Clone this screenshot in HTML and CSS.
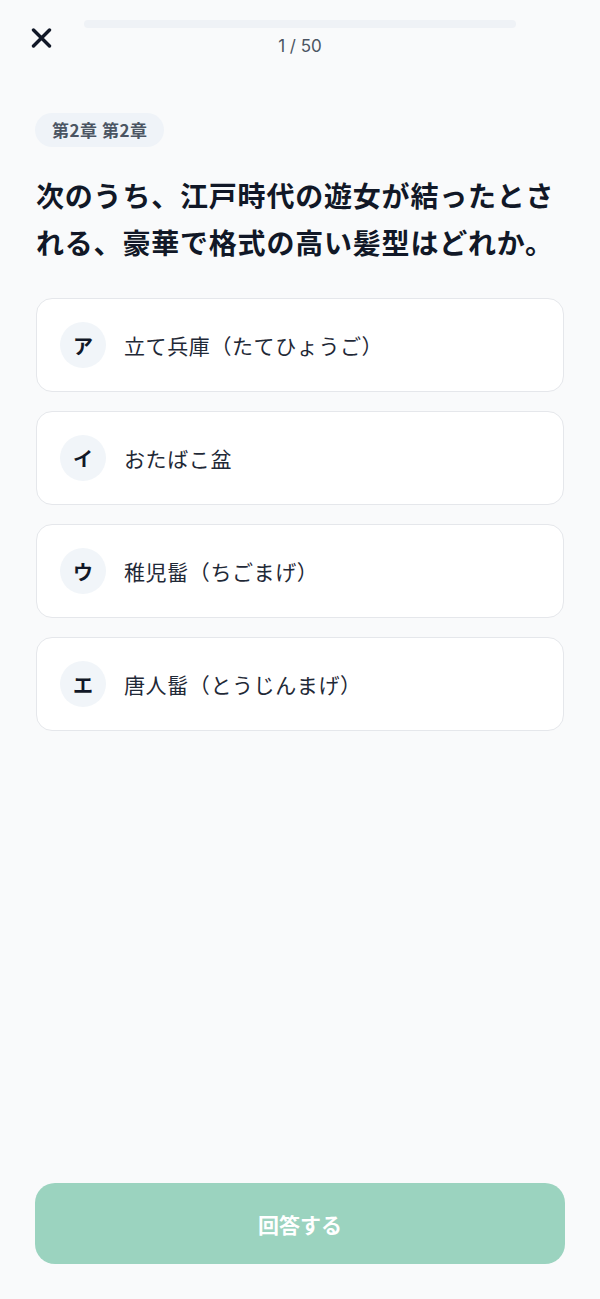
FILE: index.html
```html
<!DOCTYPE html>
<html lang="ja">
<head>
<meta charset="utf-8">
<meta name="viewport" content="width=device-width, initial-scale=1">
<title>クイズ</title>
<link rel="stylesheet" href="styles.css">
</head>
<body>
<div class="page">
  <header class="header">
    <div class="close-cell">
      <button class="close" aria-label="閉じる">
        <svg width="21" height="20" viewBox="0 0 21 20" aria-hidden="true">
          <path d="M2.5 2 L18.5 18 M18.5 2 L2.5 18" stroke="#111827" stroke-width="3.4" stroke-linecap="round" fill="none"/>
        </svg>
      </button>
    </div>
    <div class="progress-cell">
      <div class="progress"><div class="progress-fill" style="width:0%"></div></div>
      <div class="counter">1 / 50</div>
    </div>
    <div></div>
  </header>

  <main class="content">
    <span class="chip">第2章 第2章</span>
    <h1 class="question">次のうち、江戸時代の遊女が結ったとされる、豪華で格式の高い髪型はどれか。</h1>

    <ul class="options">
      <li class="option"><span class="badge">ア</span><span class="label">立て兵庫（たてひょうご）</span></li>
      <li class="option"><span class="badge">イ</span><span class="label">おたばこ盆</span></li>
      <li class="option"><span class="badge">ウ</span><span class="label">稚児髷（ちごまげ）</span></li>
      <li class="option"><span class="badge">エ</span><span class="label">唐人髷（とうじんまげ）</span></li>
    </ul>
  </main>

  <footer class="footer">
    <button class="submit" disabled>回答する</button>
  </footer>
</div>
</body>
</html>
```

FILE: styles.css
```css
html, body {
  margin: 0;
  padding: 0;
}

body {
  background: #f9fafb;
  font-family: "Inter", "Noto Sans CJK JP", sans-serif;
  color: #111827;
}

.page {
  min-height: 100vh;
  box-sizing: border-box;
  display: flex;
  flex-direction: column;
  padding-bottom: 35px;
}

.header {
  display: grid;
  grid-template-columns: 1fr 432px 1fr;
  padding-top: 20px;
}

.close-cell {
  padding-left: 31px;
  padding-top: 8px;
}

.close {
  display: block;
  width: 21px;
  height: 20px;
  padding: 0;
  margin: 0;
  border: 0;
  background: none;
}

.close svg {
  display: block;
}

.progress {
  height: 8px;
  border-radius: 4px;
  background: #eff2f6;
  overflow: hidden;
}

.progress-fill {
  height: 100%;
  background: #34a57f;
}

.counter {
  margin-top: 8px;
  text-align: center;
  font-family: "Inter", "Noto Sans CJK JP", sans-serif;
  font-size: 17px;
  line-height: 20px;
  color: #4b5563;
}

.content {
  padding: 0 36px;
  display: flex;
  flex-direction: column;
  align-items: flex-start;
}

.chip {
  margin-top: 57px;
  margin-left: -1px;
  height: 34px;
  line-height: 34px;
  padding: 0 17px;
  border-radius: 17px;
  background: #eff3f8;
  font-family: "Noto Sans CJK JP", sans-serif;
  font-size: 17px;
  font-weight: 700;
  letter-spacing: 0.5px;
  color: #4b5563;
}

.question {
  margin: 25px 0 0;
  font-family: "Noto Sans CJK JP", sans-serif;
  font-size: 28px;
  line-height: 47px;
  font-weight: 700;
  letter-spacing: 0.8px;
  color: #111827;
}

.options {
  list-style: none;
  margin: 32px 0 0;
  padding: 0;
  width: 100%;
  display: flex;
  flex-direction: column;
  gap: 19px;
}

.option {
  display: flex;
  align-items: center;
  gap: 18px;
  box-sizing: border-box;
  height: 94px;
  padding: 0 23px;
  background: #ffffff;
  border: 1px solid #e5e7eb;
  border-radius: 16px;
}

.badge {
  flex: none;
  width: 46px;
  height: 46px;
  border-radius: 50%;
  background: #f1f5f9;
  display: flex;
  align-items: center;
  justify-content: center;
  font-family: "Noto Sans CJK JP", sans-serif;
  font-size: 20px;
  font-weight: 700;
  color: #111827;
}

.label {
  font-family: "Noto Sans CJK JP", sans-serif;
  font-size: 21px;
  letter-spacing: 0.6px;
  color: #1f2937;
}

.footer {
  margin-top: auto;
  padding: 0 35px;
}

.submit {
  display: block;
  width: 100%;
  height: 81px;
  border: 0;
  border-radius: 20px;
  background: #9bd3bf;
  color: #ffffff;
  font-family: "Noto Sans CJK JP", sans-serif;
  font-size: 21px;
  font-weight: 700;
}
```
